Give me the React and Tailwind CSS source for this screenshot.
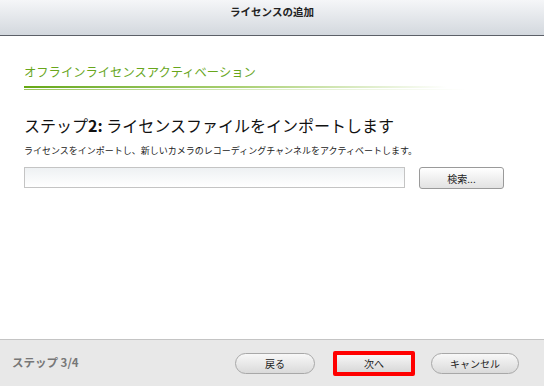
export default function App() {
  const font = { fontFamily: '"Noto Sans CJK JP", "Noto Sans", sans-serif' };
  return (
    <div className="w-[544px] h-[386px] flex flex-col bg-white overflow-hidden" style={font}>
      <div className="h-[36px] shrink-0 flex items-center justify-center border-b border-[#5c6068] bg-gradient-to-b from-[#f5f6f8] to-[#d3d8de]">
        <span className="text-[10.5px] font-bold text-[#222] leading-none -mt-[10px]">ライセンスの追加</span>
      </div>
      <div className="flex-1 flex flex-col px-[24px]">
        <div className="mt-[28px] text-[12.3px] leading-[16px] text-[#68a61c]">オフラインライセンスアクティベーション</div>
        <div className="mt-[6px] h-[2px] w-[423px] bg-gradient-to-r from-[#66a812] via-[#a8cf70] to-transparent" />
        <div className="mt-[1px] h-[1px] w-[443px] bg-gradient-to-r from-[#9cc65c] via-[#d8eac0] to-transparent" />
        <div className="mt-[23px] text-[16px] leading-[24px] text-[#111]">
          ステップ<span className="font-bold">2:</span> ライセンスファイルをインポートします
        </div>
        <div className="mt-[7px] text-[9px] leading-[14px] text-[#222]">
          ライセンスをインポートし、新しいカメラのレコーディングチャンネルをアクティベートします。
        </div>
        <div className="mt-[9px] flex items-start">
          <div className="w-[381px] h-[21px] border border-[#c4c4c4] bg-gradient-to-b from-[#eef1f3] to-white" />
          <div className="ml-[14px] w-[85px] h-[22px] rounded-[3px] border border-[#9a9a9a] bg-gradient-to-b from-white to-[#e2e2e2] flex items-center justify-center text-[10px] text-[#222]">
            検索...
          </div>
        </div>
      </div>
      <div className="h-[47px] shrink-0 border-t border-[#c4c4c4] bg-[#e8e8e8] flex items-center pl-[12px]">
        <span className="text-[11.5px] font-bold text-[#777] w-[223px]">ステップ 3/4</span>
        <div className="w-[80px] h-[21px] rounded-full border border-[#a8a8a8] bg-gradient-to-b from-[#f8f8f8] to-[#dadada] flex items-center justify-center text-[10px] text-[#222]">
          戻る
        </div>
        <div className="ml-[18px] w-[82px] h-[25px] border-[4px] border-[#ff0000] rounded-[2px] flex">
          <div className="flex-1 bg-gradient-to-b from-[#f6f6f6] to-[#d8d8d8] flex items-center justify-center text-[10px] text-[#222]">
            次へ
          </div>
        </div>
        <div className="ml-[16px] w-[88px] h-[21px] rounded-full border border-[#a8a8a8] bg-gradient-to-b from-[#f8f8f8] to-[#dadada] flex items-center justify-center text-[10px] text-[#222]">
          キャンセル
        </div>
      </div>
    </div>
  );
}
